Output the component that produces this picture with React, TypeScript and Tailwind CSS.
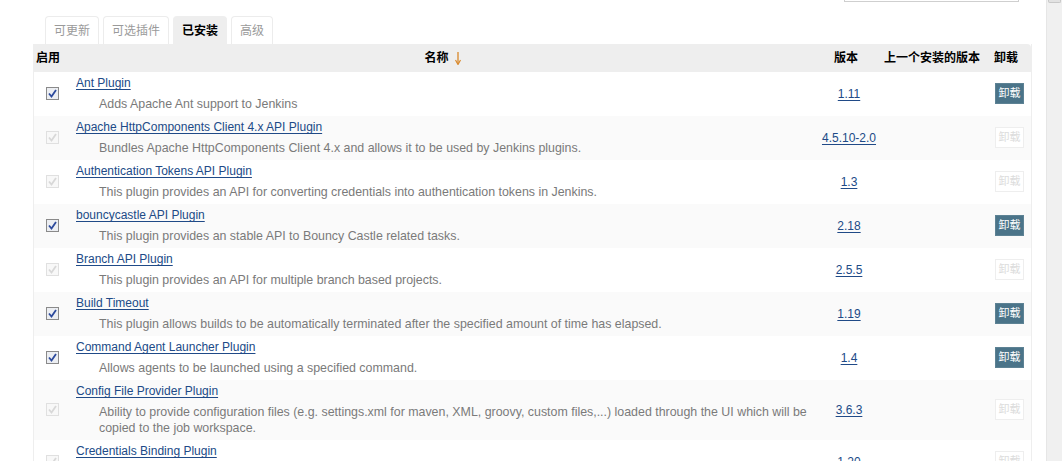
import React from "react";

type Plugin = {
  name: string;
  desc: string;
  version: string;
  active: boolean;
};

const plugins: Plugin[] = [
  { name: "Ant Plugin", desc: "Adds Apache Ant support to Jenkins", version: "1.11", active: true },
  {
    name: "Apache HttpComponents Client 4.x API Plugin",
    desc: "Bundles Apache HttpComponents Client 4.x and allows it to be used by Jenkins plugins.",
    version: "4.5.10-2.0",
    active: false,
  },
  {
    name: "Authentication Tokens API Plugin",
    desc: "This plugin provides an API for converting credentials into authentication tokens in Jenkins.",
    version: "1.3",
    active: false,
  },
  {
    name: "bouncycastle API Plugin",
    desc: "This plugin provides an stable API to Bouncy Castle related tasks.",
    version: "2.18",
    active: true,
  },
  {
    name: "Branch API Plugin",
    desc: "This plugin provides an API for multiple branch based projects.",
    version: "2.5.5",
    active: false,
  },
  {
    name: "Build Timeout",
    desc: "This plugin allows builds to be automatically terminated after the specified amount of time has elapsed.",
    version: "1.19",
    active: true,
  },
  {
    name: "Command Agent Launcher Plugin",
    desc: "Allows agents to be launched using a specified command.",
    version: "1.4",
    active: true,
  },
  {
    name: "Config File Provider Plugin",
    desc: "Ability to provide configuration files (e.g. settings.xml for maven, XML, groovy, custom files,...) loaded through the UI which will be copied to the job workspace.",
    version: "3.6.3",
    active: false,
  },
  {
    name: "Credentials Binding Plugin",
    desc: "Allows credentials to be bound to environment variables for use from miscellaneous build steps.",
    version: "1.20",
    active: false,
  },
];

const tabs = ["可更新", "可选插件", "已安装", "高级"];

function CheckBox({ active }: { active: boolean }) {
  return (
    <div
      className={
        "w-[13px] h-[13px] border flex items-center justify-center " +
        (active ? "border-[#8a8a8a] bg-[#eceef2]" : "border-[#e0e0e0] bg-[#f8f8f8]")
      }
    >
      <svg width="9" height="9" viewBox="0 0 9 9">
        <path
          d="M1 4.5 L3.5 7.5 L8 1"
          fill="none"
          stroke={active ? "#2c4a9c" : "#d8d8d8"}
          strokeWidth="1.8"
        />
      </svg>
    </div>
  );
}

export default function App() {
  return (
    <div
      className="w-[1062px] h-[461px] overflow-hidden flex bg-white text-[12px] text-black"
      style={{ fontFamily: '"Liberation Sans", Arial, "Noto Sans CJK SC", sans-serif' }}
    >
      <div className="flex-1 pl-[33px] pr-[14px]">
        <div className="flex justify-end pr-[13px]">
          <div className="w-[175px] h-[24px] -mt-[22px] border border-[#cfcfcf] bg-white" />
        </div>

        <div className="flex gap-[4px] ml-[12px] mt-[14px] h-[28px]">
          {tabs.map((t) => (
            <div
              key={t}
              className={
                "px-[8px] flex items-center rounded-t-[4px] border border-b-0 " +
                (t === "已安装"
                  ? "bg-[#eeeeee] border-[#eeeeee] text-black font-bold"
                  : "border-[#ececec] text-[#9a9a9a]")
              }
            >
              {t}
            </div>
          ))}
        </div>

        <div className="border-l border-r border-[#eeeeee]">
          <div className="grid grid-cols-[37px_1fr_70px_96px_51px] h-[28px] items-center bg-[#eeeeee] rounded-tr-[4px] font-bold whitespace-nowrap">
            <div className="pl-[2px]">启用</div>
            <div className="flex items-center justify-center gap-[6px]">
              <span>名称</span>
              <svg width="6" height="13" viewBox="0 0 6 13">
                <path d="M3 0 V11" stroke="#d9882a" strokeWidth="1.3" />
                <path d="M0.5 8 L3 12.5 L5.5 8" fill="none" stroke="#d9882a" strokeWidth="1.2" />
              </svg>
            </div>
            <div className="text-center pr-[6px]">版本</div>
            <div>上一个安装的版本</div>
            <div className="pl-[14px]">卸载</div>
          </div>

          {plugins.map((p, i) => (
            <div
              key={p.name}
              className={
                "grid grid-cols-[37px_1fr_70px_96px_51px] items-center pt-[3px] pb-[4px] " +
                (i % 2 === 1 ? "bg-[#fafafa]" : "bg-white")
              }
            >
              <div className="pl-[12px]">
                <CheckBox active={p.active} />
              </div>
              <div className="pl-[5px] pr-[6px]">
                <div className="leading-[16px]">
                  <a className="text-[#204a87] underline underline-offset-2 cursor-pointer">{p.name}</a>
                </div>
                <div className="mt-[5px] pl-[23px] leading-[16px] text-[12.4px] text-[#7a7a7a]">{p.desc}</div>
              </div>
              <div className="text-center">
                <a className="text-[#204a87] underline underline-offset-2 cursor-pointer">{p.version}</a>
              </div>
              <div />
              <div className="pl-[15px]">
                <div
                  className={
                    "w-[29px] h-[21px] flex items-center justify-center text-[11px] border " +
                    (p.active
                      ? "bg-[#4b7489] border-[#5d8294] text-white"
                      : "bg-white border-[#eeeeee] text-[#dcdcdc]")
                  }
                >
                  卸载
                </div>
              </div>
            </div>
          ))}
        </div>
      </div>

      <div className="w-[16px] bg-[#f0f0f0] border-l border-[#e6e6e6]">
        <div className="h-[3px] mx-[1px] bg-[#e2e2e2] border border-t-0 border-[#c8c8c8] rounded-b-[2px]" />
      </div>
    </div>
  );
}
